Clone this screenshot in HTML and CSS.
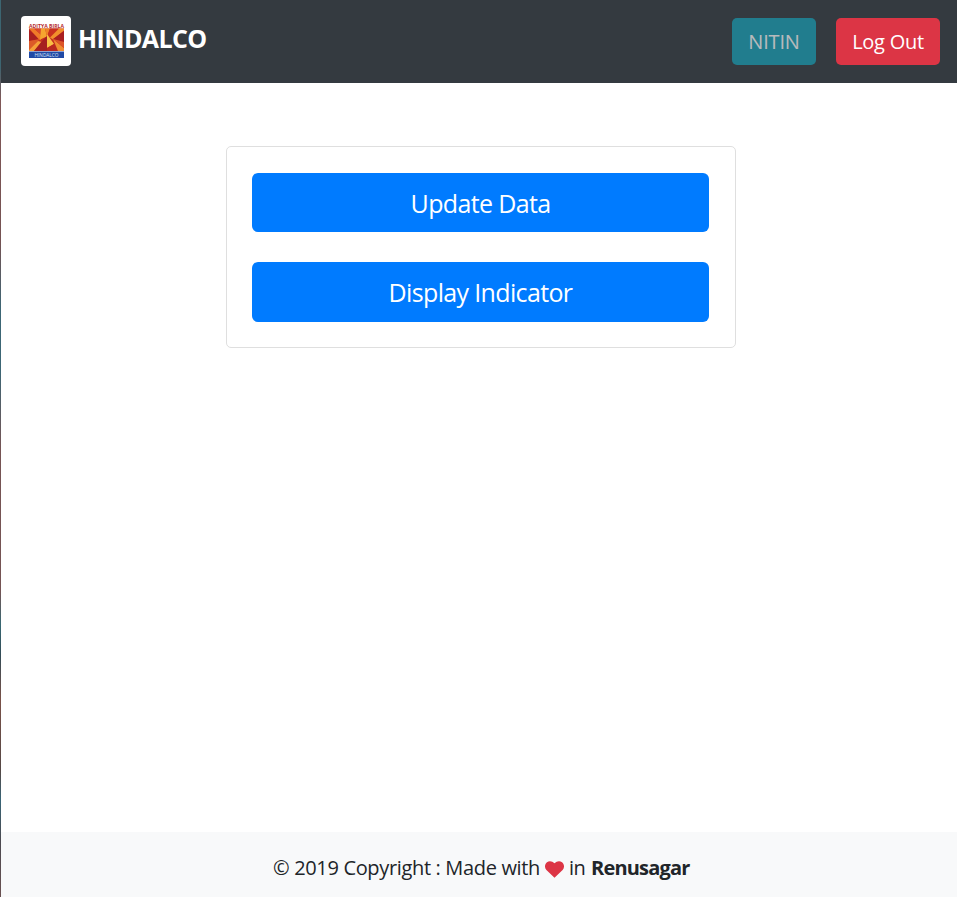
FILE: index.html
```html
<!DOCTYPE html>
<html lang="en">
<head>
<meta charset="utf-8">
<title>Hindalco</title>
<link rel="stylesheet" href="styles.css">
</head>
<body>
<div class="edge"></div>
<div class="page">
  <header class="navbar">
    <div class="brand">
      <span class="logo">
        <svg width="50" height="50" viewBox="0 0 50 50" aria-hidden="true">
          <text x="8" y="11.600" class="logo-top" textLength="35" lengthAdjust="spacingAndGlyphs">ADITYA BIRLA</text>
          <path fill="#c42e20" d="M8 12.500h35V35H8z"/>
          <path fill="#a91f20" d="M8 14l11 9-11 2z"/>
          <path fill="#ef7a28" d="M8 12.500h5l9 8-3 4z"/>
          <path fill="#d9482a" d="M13 12.500h7l2 8z"/>
          <path fill="#f6a52f" d="M20 12.500l-1 11 7-3-2-8z"/>
          <path fill="#f08527" d="M24 12.500h5l-3 8z"/>
          <path fill="#c9301f" d="M29 12.500h9l-9 9-3-1z"/>
          <path fill="#f2902c" d="M38 12.500h5v2l-11 9-3-2z"/>
          <path fill="#a91f20" d="M43 15v11l-11-3z"/>
          <path fill="#dc5a28" d="M8 25l11-2-11 11z"/>
          <path fill="#f5a138" d="M8 34l9-9 4 1-8 9H8z"/>
          <path fill="#a51f20" d="M21 25l-8 10h13V20z"/>
          <path fill="#f9bf45" d="M26 18l7 10-7 4z"/>
          <path fill="#b92820" d="M26 32l7-4 4 7H26z"/>
          <path fill="#ef8d31" d="M32 23l11 9v3h-6z"/>
          <path fill="#dc5528" d="M32 23l11 3v6z"/>
          <path fill="#2049a5" d="M8 35.500h35V42H8z"/>
          <text x="13.500" y="41" class="logo-bottom" textLength="24" lengthAdjust="spacingAndGlyphs">HINDALCO</text>
        </svg>
      </span>
      <span class="brand-name">HINDALCO</span>
    </div>
    <div class="actions">
      <button class="btn btn-user" disabled><span>NITIN</span></button>
      <button class="btn btn-logout"><span>Log Out</span></button>
    </div>
  </header>
  <main class="content">
    <div class="card">
      <button class="btn btn-main"><span class="update">Update Data</span></button>
      <button class="btn btn-main"><span class="display">Display Indicator</span></button>
    </div>
  </main>
  <footer class="footer">
    <span class="copyright">© 2019 Copyright : Made with</span>
    <svg class="heart" width="19" height="17" viewBox="0 0 19 17" aria-hidden="true"><path fill="#dc3545" d="M9.500 16.800L1.400 9C-.8 6.700-.3 3 2 1.200 4.200-.5 7.200-.1 9.500 2.300 11.800-.1 14.800-.5 17 1.200 19.300 3 19.800 6.700 17.600 9z"/></svg>
    <span class="in">in</span>
    <strong>Renusagar</strong>
  </footer>
</div>
</body>
</html>
```
FILE: styles.css
```css
* { box-sizing: border-box; }
body {
  margin: 0;
  height: 897px;
  display: flex;
  overflow: hidden;
  background: #fff;
  color: #212529;
  font-family: "Segoe UI", "Open Sans", "Noto Sans", sans-serif;
}
.edge {
  width: 1px;
  flex: none;
  background: linear-gradient(#3c6571 0, #3c6571 65px, #805858 100px, #755252 240px, #3c6675 310px, #3c6675 370px, #765454 450px, #755454 590px, #376873 625px, #334c57 655px, #7a5148 700px, #554845 770px, #386577 800px, #4b4a50 840px, #6a5151 897px);
}
.page { flex: 1; display: flex; flex-direction: column; }
.navbar {
  height: 83px;
  flex: none;
  display: flex;
  align-items: center;
  justify-content: space-between;
  padding: 0 17px 0 20px;
  background: #343a40;
}
.brand { display: flex; align-items: center; gap: 7px; padding-bottom: 2px; color: #fff; }
.logo { width: 50px; height: 50px; border-radius: 4px; background: #fff; overflow: hidden; }
.logo svg { display: block; }
.logo-top { fill: #b52b2c; font: bold 5.5px "Open Sans", sans-serif; }
.logo-bottom { fill: #dce4f4; font: 5.5px "Open Sans", sans-serif; }
.brand-name { font-size: 25px; line-height: 38px; font-weight: 700; letter-spacing: -0.6px; padding-bottom: 5px; }
.actions { display: flex; gap: 20px; }
.btn {
  display: flex;
  align-items: center;
  justify-content: center;
  border: 0;
  padding: 0;
  border-radius: 5px;
  color: #fff;
  font-family: inherit;
  font-size: 20px;
  white-space: nowrap;
}
.btn-user { width: 84px; height: 47px; background: #17a2b8; opacity: .65; letter-spacing: -0.2px; }
.btn-logout { width: 104px; height: 47px; background: #dc3545; letter-spacing: -0.25px; }
.content { flex: 1; padding: 63px 0 0 225px; }
.card {
  width: 510px;
  height: 202px;
  border: 1px solid #dfdfdf;
  border-radius: 5px;
  padding: 26px 26px 25px 25px;
  display: flex;
  flex-direction: column;
  gap: 30px;
}
.btn-main { width: 457px; height: 59px; background: #007bff; border-radius: 6px; font-size: 25px; }
.btn-main:last-child { height: 60px; }
.update, .display { letter-spacing: -0.65px; }
.footer {
  height: 65px;
  flex: none;
  display: flex;
  align-items: center;
  padding: 6px 0 0 272px;
  background: #f8f9fa;
  font-size: 20px;
  white-space: nowrap;
}
.copyright { width: 272px; letter-spacing: -0.34px; }
.heart { flex: none; margin-top: 4px; }
.in { margin-left: 5px; width: 22px; letter-spacing: -0.5px; }
.footer strong { font-weight: 700; letter-spacing: -0.8px; }
```
